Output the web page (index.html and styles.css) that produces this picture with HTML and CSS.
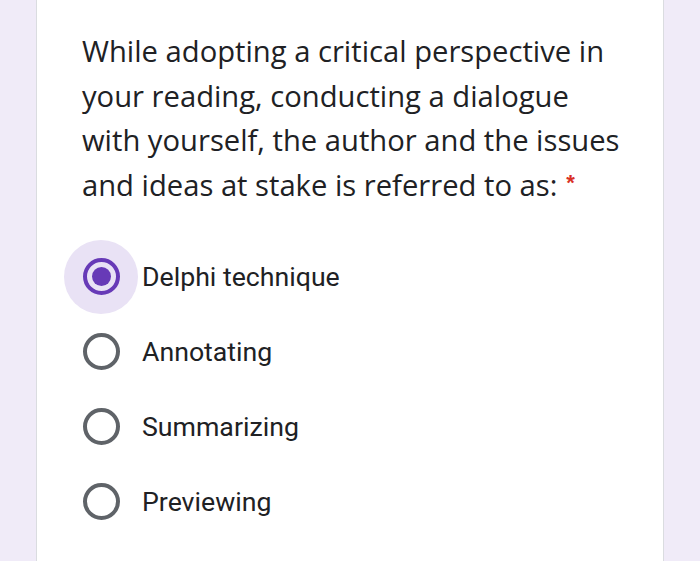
FILE: index.html
```html
<!DOCTYPE html>
<html>
<head>
<meta charset="utf-8">
<link rel="stylesheet" href="styles.css">
</head>
<body>
<div class="page">
  <div class="card">
    <div class="question">While adopting a critical perspective in<br>your reading, conducting a dialogue<br>with yourself, the author and the issues<br>and ideas at stake is referred to as:<span class="req">*</span></div>
    <div class="options">
      <div class="option">
        <span class="radio checked"><span class="halo"></span><span class="ring"><span class="dot"></span></span></span>
        <span class="label">Delphi technique</span>
      </div>
      <div class="option">
        <span class="radio"><span class="ring"></span></span>
        <span class="label">Annotating</span>
      </div>
      <div class="option">
        <span class="radio"><span class="ring"></span></span>
        <span class="label">Summarizing</span>
      </div>
      <div class="option">
        <span class="radio"><span class="ring"></span></span>
        <span class="label">Previewing</span>
      </div>
    </div>
  </div>
</div>
</body>
</html>
```
FILE: styles.css
```css
html, body {
  margin: 0;
  padding: 0;
  background: #f0ebf8;
  height: 100%;
  overflow: hidden;
}
.page {
  display: flex;
  justify-content: flex-start;
  height: 561px;
  padding-left: 36px;
}
.card {
  width: 628px;
  background: #fff;
  border-left: 1px solid #dadce0;
  border-right: 1px solid #dadce0;
  padding: 29px 0 0 45px;
  box-sizing: border-box;
}
.question {
  font-family: "Open Sans", sans-serif;
  font-size: 29.2px;
  line-height: 44.5px;
  color: #202124;
  white-space: nowrap;
}
.req {
  color: #d93025;
  font-family: "Liberation Sans", sans-serif;
  font-weight: bold;
  font-size: 22px;
  vertical-align: top;
  line-height: 40px;
  margin-left: 9px;
}
.options {
  margin-top: 32px;
  display: flex;
  flex-direction: column;
}
.option {
  display: flex;
  align-items: center;
  height: 75px;
}
.radio {
  position: relative;
  width: 38px;
  height: 38px;
  flex: none;
  display: flex;
  align-items: center;
  justify-content: center;
}
.ring {
  position: relative;
  box-sizing: border-box;
  width: 37px;
  height: 37px;
  border: 4px solid #5f6368;
  border-radius: 50%;
  display: flex;
  align-items: center;
  justify-content: center;
}
.checked .ring {
  border-color: #673ab7;
}
.dot {
  width: 19px;
  height: 19px;
  border-radius: 50%;
  background: #673ab7;
}
.halo {
  position: absolute;
  left: -18px;
  top: -18px;
  width: 74px;
  height: 74px;
  border-radius: 50%;
  background: #e9e2f5;
}
.label {
  font-family: Roboto, sans-serif;
  font-size: 26.7px;
  color: #202124;
  margin-left: 22px;
}
```
